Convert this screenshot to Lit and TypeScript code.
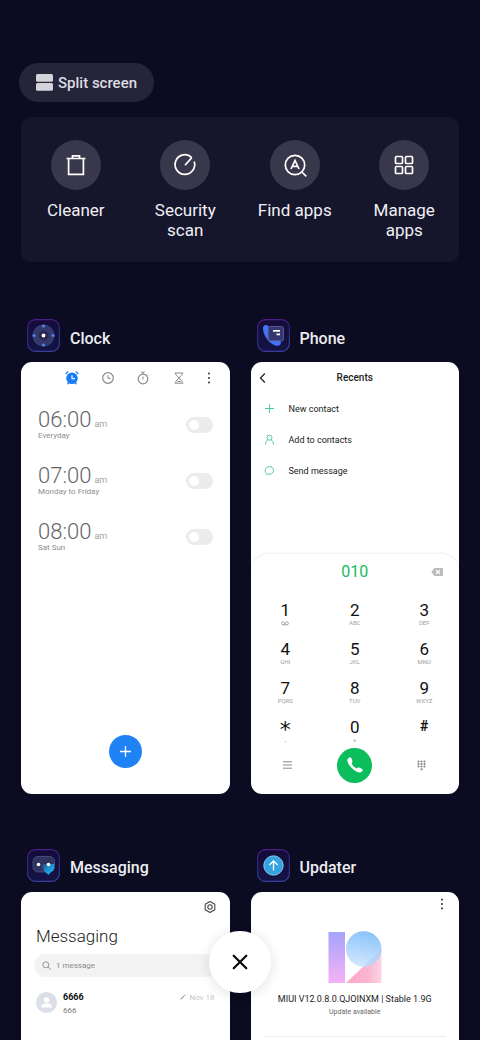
import { LitElement, html, css, svg, nothing } from "lit";
import { customElement, property } from "lit/decorators.js";

const reset = css`
  * { box-sizing: border-box; }
  button {
    font: inherit;
    color: inherit;
    background: none;
    border: 0;
    padding: 0;
    margin: 0;
    cursor: pointer;
  }
  svg { display: block; flex: none; }
`;

const moreDots = svg`<circle cx="7" cy="2.5" r="1"/><circle cx="7" cy="7" r="1"/><circle cx="7" cy="11.5" r="1"/>`;

/* ---------- Quick actions ---------- */

@customElement("quick-actions")
class QuickActions extends LitElement {
  static styles = [reset, css`
    :host { display: block; }
    .panel {
      display: grid;
      grid-template-columns: repeat(4, 1fr);
      padding: 23px 0 22px;
      border-radius: 10px;
      background: #15152b;
    }
    .action {
      display: flex;
      flex-direction: column;
      align-items: center;
      gap: 10px;
      color: #f0f0f4;
      font-size: 17px;
      line-height: 20px;
    }
    .label { max-width: 80px; }
    .disc {
      display: grid;
      place-items: center;
      width: 50px;
      height: 50px;
      border-radius: 50%;
      background: #38374b;
    }
  `];

  icons = {
    bin: svg`<path d="M2.500 5.500H21.500M8.500 5.500V2.800H15.500V5.500M4.600 5.500V21.300H19.400V5.500"/>`,
    scan: svg`<path d="M18.800 4.600A9.800 9.800 0 1 0 21.200 8.500M12 12.300L18.800 4.600"/>`,
    find: svg`<circle cx="12" cy="12" r="9.700"/><path d="M18.800 19L23.300 23.300"/><path d="M8 16L12 7.500L16 16M9.600 13.300H14.400"/>`,
    grid: svg`<rect x="3.500" y="3.500" width="7" height="7" rx="1"/><rect x="13.500" y="3.500" width="7" height="7" rx="1"/><rect x="3.500" y="13.500" width="7" height="7" rx="1"/><rect x="13.500" y="13.500" width="7" height="7" rx="1"/>`,
  };

  render() {
    const items = [
      ["Cleaner", this.icons.bin],
      ["Security scan", this.icons.scan],
      ["Find apps", this.icons.find],
      ["Manage apps", this.icons.grid],
    ];
    return html`<div class="panel">
      ${items.map(([label, icon]) => html`
        <button class="action">
          <span class="disc">
            <svg width="24" height="24" viewBox="0 0 24 24" fill="none" stroke="#fff" stroke-width="1.7" overflow="visible">${icon}</svg>
          </span>
          <span class="label">${label}</span>
        </button>`)}
    </div>`;
  }
}

/* ---------- Clock ---------- */

@customElement("clock-preview")
class ClockPreview extends LitElement {
  static styles = [reset, css`
    :host { display: flex; flex-direction: column; flex: 1; }
    .tabs {
      display: flex;
      align-items: center;
      height: 32px;
      padding: 0 9px 0 33px;
    }
    .tab { flex: 3; display: grid; place-items: center; }
    .more { flex: 2; display: grid; place-items: center; }
    .alarms { list-style: none; margin: 0; padding: 3px 17px 0; }
    .alarm {
      display: flex;
      align-items: center;
      justify-content: space-between;
      height: 56px;
      color: #8d8d8d;
    }
    .time { display: block; font-size: 22px; font-weight: 300; line-height: 22px; color: #666; }
    .ampm { font-size: 9px; font-weight: 400; line-height: 9px; color: #a4a4a4; margin-left: 3px; }
    .days { display: block; font-size: 8px; line-height: 10px; }
    .toggle {
      appearance: none;
      width: 27px;
      height: 16px;
      margin: 0;
      padding: 3px;
      border-radius: 8px;
      background: #ececec;
    }
    .toggle::before {
      content: "";
      display: block;
      width: 10px;
      height: 10px;
      border-radius: 50%;
      background: #fff;
    }
    .toggle:checked { background: #1f82f5; }
    .toggle:checked::before { margin-left: 11px; }
    .add {
      display: grid;
      place-items: center;
      width: 33px;
      height: 33px;
      margin: auto auto 26px;
      border-radius: 50%;
      background: #1f82f5;
    }
  `];

  render() {
    const alarms = [["06:00", "Everyday"], ["07:00", "Monday to Friday"], ["08:00", "Sat Sun"]];
    return html`
      <nav class="tabs">
        <button class="tab" aria-label="Alarm">
          <svg width="14" height="14" viewBox="0 0 14 14" fill="none" stroke-linecap="round">
            <circle cx="7" cy="7.300" r="5.800" fill="#1a7df5"/>
            <path d="M1 2.500L2.800 1M13 2.500L11.200 1M2.800 12.800L3.500 12M11.200 12.800L10.500 12" stroke="#1a7df5" stroke-width="1.300"/>
            <path d="M7 4.500V7.600H9.500" stroke="#fff" stroke-width="1.100"/>
          </svg>
        </button>
        <button class="tab" aria-label="World clock">
          <svg width="14" height="14" viewBox="0 0 14 14" fill="none" stroke="#8a8a8a">
            <circle cx="7" cy="7" r="5.300" stroke-width="1.200"/><path d="M7 4V7.300H9.800"/>
          </svg>
        </button>
        <button class="tab" aria-label="Stopwatch">
          <svg width="14" height="14" viewBox="0 0 14 14" fill="none" stroke="#8a8a8a">
            <circle cx="7" cy="8" r="4.800" stroke-width="1.200"/><path d="M7 5.500V8.500M5.300 1.200H8.700M7 1.200V3M11 3.500L12 4.500"/>
          </svg>
        </button>
        <button class="tab" aria-label="Timer">
          <svg width="14" height="14" viewBox="0 0 14 14" fill="none" stroke="#8a8a8a">
            <path d="M2.800 2H11.200M2.800 12.200H11.200M3.800 2V3.500L10.200 10.500V12M10.200 2V3.500L3.800 10.500V12M5.500 10.500H8.500"/>
          </svg>
        </button>
        <button class="more" aria-label="More">
          <svg width="14" height="14" viewBox="0 0 14 14" fill="#333">${moreDots}</svg>
        </button>
      </nav>
      <ul class="alarms">
        ${alarms.map(([time, days], i) => html`
          <li class="alarm">
            <label for="alarm-${i}">
              <span class="time">${time}<span class="ampm">am</span></span>
              <span class="days">${days}</span>
            </label>
            <input class="toggle" type="checkbox" id="alarm-${i}">
          </li>`)}
      </ul>
      <button class="add" aria-label="Add alarm">
        <svg width="13" height="13" viewBox="0 0 13 13" stroke="#fff" stroke-width="1.300"><path d="M6.500 1V12M1 6.500H12"/></svg>
      </button>`;
  }
}

/* ---------- Phone ---------- */

@customElement("phone-preview")
class PhonePreview extends LitElement {
  static styles = [reset, css`
    :host { display: flex; flex-direction: column; flex: 1; color: #222; }
    .bar {
      display: grid;
      grid-template-columns: 14px 1fr 14px;
      align-items: center;
      height: 31px;
      padding: 0 5px;
    }
    .title { margin: 0; font-size: 10px; font-weight: 500; text-align: center; }
    .options { display: flex; flex-direction: column; }
    .option {
      display: flex;
      align-items: center;
      gap: 14px;
      height: 31px;
      padding: 0 13px;
      font-size: 9px;
    }
    .dialer {
      margin-top: auto;
      padding-bottom: 11px;
      border-radius: 18px 18px 0 0;
      box-shadow: 0 -1px 3px rgba(0, 0, 0, 0.08);
    }
    .entry {
      display: grid;
      grid-template-columns: 1fr auto 1fr;
      align-items: center;
      height: 36px;
      padding: 0 16px;
      color: #14bd5c;
      font-size: 16px;
    }
    .number { grid-column: 2; }
    .erase { justify-self: end; }
    .keys {
      display: grid;
      grid-template-columns: repeat(3, 1fr);
      row-gap: 13px;
      padding: 11px 0 4px;
    }
    .key { display: flex; flex-direction: column; align-items: center; height: 26px; }
    .digit { height: 18px; font-size: 17px; line-height: 18px; color: #111; }
    .star { font-family: "DejaVu Sans", sans-serif; font-size: 22px; line-height: 24px; }
    .hash { font-size: 14px; font-weight: 700; line-height: 16px; }
    .letters { height: 8px; font-size: 6px; line-height: 8px; color: #a0a0a0; }
    .voicemail { padding-top: 2px; }
    .calls {
      display: grid;
      grid-template-columns: repeat(3, 1fr);
      place-items: center;
      padding: 0 4px;
    }
    .call {
      display: grid;
      place-items: center;
      width: 35px;
      height: 35px;
      border-radius: 50%;
      background: #0bbd5b;
    }
  `];

  render() {
    const options = [
      ["New contact", svg`<path d="M5.500 1V10M1 5.500H10"/>`],
      ["Add to contacts", svg`<circle cx="5.500" cy="3.700" r="2.500"/><path d="M1.500 10.500C1.500 7.500 3 6.300 4.200 6M9.500 10.500C9.500 7.500 8 6.300 6.800 6"/>`],
      ["Send message", svg`<path d="M3 9.500C0 7.500 .8 1.500 5.500 1.500C10.500 1.500 10.800 8.800 6 9.200H3"/>`],
    ];
    const keys = [
      ["1", ""], ["2", "ABC"], ["3", "DEF"],
      ["4", "GHI"], ["5", "JKL"], ["6", "MNO"],
      ["7", "PQRS"], ["8", "TUV"], ["9", "WXYZ"],
      ["*", ","], ["0", "+"], ["#", ""],
    ];
    const variant = (k: string) => (k === "*" ? "star" : k === "#" ? "hash" : "");
    return html`
      <header class="bar">
        <button aria-label="Back">
          <svg width="14" height="14" viewBox="0 0 14 14" fill="none" stroke="#222" stroke-width="1.300"><path d="M8.800 2.500L4.500 7L8.800 11.500"/></svg>
        </button>
        <h3 class="title">Recents</h3>
      </header>
      <div class="options">
        ${options.map(([label, icon]) => html`
          <button class="option">
            <svg width="11" height="11" viewBox="0 0 11 11" fill="none" stroke="#3cc795" stroke-width="0.900">${icon}</svg>
            ${label}
          </button>`)}
      </div>
      <section class="dialer">
        <div class="entry">
          <output class="number">010</output>
          <button class="erase" aria-label="Delete digit">
            <svg width="12" height="8" viewBox="0 0 12 8"><path d="M3.500 0H11Q12 0 12 1V7Q12 8 11 8H3.500L.3 4Z" fill="#b9b9b9"/><path d="M5 2L9 6M9 2L5 6" stroke="#fff" stroke-width="1.100"/></svg>
          </button>
        </div>
        <div class="keys">
          ${keys.map(([digit, letters]) => html`
            <button class="key">
              <span class="digit ${variant(digit)}">${digit}</span>
              ${digit === "1"
                ? html`<span class="letters voicemail"><svg width="8" height="5" viewBox="0 0 8 5" fill="none" stroke="#a0a0a0" stroke-width="0.800"><circle cx="2" cy="2.300" r="1.500"/><circle cx="6" cy="2.300" r="1.500"/><path d="M2 3.800H6"/></svg></span>`
                : letters ? html`<span class="letters">${letters}</span>` : nothing}
            </button>`)}
        </div>
        <div class="calls">
          <button aria-label="Menu">
            <svg width="9" height="8" viewBox="0 0 9 8" stroke="#888"><path d="M0 .8H9M0 4H9M0 7.200H9"/></svg>
          </button>
          <button class="call" aria-label="Call">
            <svg width="18" height="18" viewBox="0 0 18 18"><path d="M2.500 2C4 .8 5 1.200 5.700 3L6.400 5C6.700 6 6 6.500 5.600 7.200C6.500 9.500 8.500 11.500 10.800 12.400C11.500 12 12 11.300 13 11.600L15.300 12.600C17 13.300 17.200 14.300 16 15.500C14.500 17 11.500 16.800 8 14C4.500 11.200 2.200 8 1.500 5.500C1.200 4 1.500 2.800 2.500 2Z" fill="#fff"/></svg>
          </button>
          <button aria-label="Hide keypad">
            <svg width="9" height="11" viewBox="0 0 9 11" fill="#888">
              ${[1.5, 4.5, 7.5].map((x) => [1.5, 4, 6.5].map((y) => svg`<circle cx=${x} cy=${y} r="1.100"/>`))}
              <circle cx="4.500" cy="9.300" r="1.100"/>
            </svg>
          </button>
        </div>
      </section>`;
  }
}

/* ---------- Messaging ---------- */

@customElement("messaging-preview")
class MessagingPreview extends LitElement {
  static styles = [reset, css`
    :host { display: flex; flex-direction: column; flex: 1; padding: 8px 13px; }
    .settings { align-self: flex-end; }
    .title { margin: 10px 2px 6px; font-size: 17px; font-weight: 300; line-height: 24px; color: #222; }
    .search {
      display: flex;
      align-items: center;
      gap: 5px;
      height: 23px;
      padding: 0 8px;
      border-radius: 12px;
      background: #f3f3f3;
    }
    .query {
      flex: 1;
      min-width: 0;
      border: 0;
      padding: 0;
      background: none;
      font: 8px Roboto, sans-serif;
    }
    .query::placeholder { color: #8c8c8c; opacity: 1; }
    .thread {
      display: flex;
      align-items: center;
      gap: 6px;
      padding: 12px 2px;
      font-size: 8px;
      line-height: 13px;
      color: #777;
    }
    .body { flex: 1; padding-top: 2px; }
    .name { display: block; font-size: 9px; font-weight: 700; color: #111; }
    .date {
      align-self: flex-start;
      display: flex;
      align-items: center;
      gap: 3px;
      padding-top: 2px;
      color: #c6c6c6;
    }
  `];

  render() {
    return html`
      <button class="settings" aria-label="Settings">
        <svg width="14" height="14" viewBox="0 0 14 14" fill="none" stroke="#444" stroke-width="1.100"><path d="M7 1.500L11.800 4.200V9.800L7 12.500L2.200 9.800V4.200Z" stroke-linejoin="round"/><circle cx="7" cy="7" r="2.200"/></svg>
      </button>
      <h3 class="title">Messaging</h3>
      <label class="search">
        <svg width="9" height="9" viewBox="0 0 9 9" fill="none" stroke="#8a8a8a" stroke-width="0.900"><circle cx="3.800" cy="3.800" r="3"/><path d="M6 6L8.700 8.700"/></svg>
        <input class="query" type="text" placeholder="1 message" aria-label="Search messages">
      </label>
      <article class="thread">
        <svg width="21" height="21" viewBox="0 0 21 21"><circle cx="10.500" cy="10.500" r="10.500" fill="#dcdfe6"/><circle cx="10.500" cy="8" r="2.700" fill="#fff"/><path d="M5 15.500C5 12 7.500 11.500 10.500 11.500S16 12 16 15.500Z" fill="#fff"/></svg>
        <div class="body"><span class="name">6666</span>666</div>
        <span class="date">
          <svg width="6" height="6" viewBox="0 0 6 6" stroke="#aaa" stroke-width="1.300"><path d="M.6 5.400L4 2M4.400 1.600L5.400 .6"/></svg>
          Nov 18
        </span>
      </article>`;
  }
}

/* ---------- Updater ---------- */

@customElement("updater-preview")
class UpdaterPreview extends LitElement {
  static styles = [reset, css`
    :host {
      display: flex;
      flex-direction: column;
      align-items: center;
      flex: 1;
      padding: 5px 10px;
    }
    .more { align-self: flex-end; }
    .logo { margin: 20px 0 9px; }
    .version { margin: 0; font-size: 9px; line-height: 14px; color: #222; white-space: nowrap; }
    .status { margin: 0; font-size: 7px; line-height: 12px; color: #666; }
    .rule { width: 182px; margin: 18px 0 0; border: 0; border-top: 1px solid #eee; }
  `];

  render() {
    return html`
      <button class="more" aria-label="More">
        <svg width="14" height="14" viewBox="0 0 14 14" fill="#333">${moreDots}</svg>
      </button>
      <svg class="logo" width="54" height="52" viewBox="0 0 54 52">
        <defs>
          <linearGradient id="bar" x2="0" y2="1"><stop stop-color="#a5a4fb"/><stop offset="1" stop-color="#f6b1f6"/></linearGradient>
          <linearGradient id="ball" x1="0.600" x2="0.400" y2="1"><stop stop-color="#8ac3fb"/><stop offset="1" stop-color="#d3e8fd"/></linearGradient>
          <linearGradient id="foot"><stop stop-color="#ffa9c5"/><stop offset="0.600" stop-color="#fbb3cf"/><stop offset="1" stop-color="#fcd5e3"/></linearGradient>
          <clipPath id="overlap"><path d="M18 52L54 18V52Z"/></clipPath>
        </defs>
        <rect x="0.500" y="1" width="16.500" height="51" fill="url(#bar)"/>
        <path d="M18 52L53.500 18V52Z" fill="url(#foot)"/>
        <circle cx="35.700" cy="18" r="17.800" fill="url(#ball)"/>
        <circle cx="35.700" cy="18" r="17.800" fill="#b5c6f2" fill-opacity="0.500" clip-path="url(#overlap)"/>
      </svg>
      <p class="version">MIUI V12.0.8.0.QJOINXM | Stable 1.9G</p>
      <p class="status">Update available</p>
      <hr class="rule">`;
  }
}

/* ---------- Launcher icon ---------- */

@customElement("app-icon")
class AppIcon extends LitElement {
  static styles = [reset, css`:host { display: block; flex: none; }`];

  @property() name = "";

  art() {
    switch (this.name) {
      case "Clock":
        return svg`
          <circle cx="16.500" cy="16.500" r="10.500" fill="#34386b" stroke="#3d4b86" stroke-width="0.800"/>
          <g fill="#4c86ef"><circle cx="16.500" cy="7" r="1.500"/><circle cx="16.500" cy="26" r="1.500"/><circle cx="7" cy="16.500" r="1.500"/><circle cx="26" cy="16.500" r="1.500"/></g>
          <circle cx="16.500" cy="16.500" r="5" fill="#2b2850"/><circle cx="16.500" cy="16.500" r="1.900" fill="#fff"/>`;
      case "Phone":
        return svg`
          <path d="M6 9.500C6 5.500 10 5 11.500 7.500L13 21H22L24 23C24 27 20 28 16 25.500C10 22 6 15 6 9.500Z" fill="#3d74fb"/>
          <rect x="11" y="7.500" width="15.500" height="14.500" rx="2" fill="#393d78" fill-opacity="0.880" stroke="#6a6fac" stroke-width="0.700"/>
          <path d="M16 11.800H23M19.500 15.300H23" stroke="#fff" stroke-width="1.800"/>`;
      case "Messaging":
        return svg`
          <defs><linearGradient id="tail" x1="0" y1="0" x2="1" y2="0.800"><stop stop-color="#31335f"/><stop offset="0.500" stop-color="#1c8fd0"/><stop offset="1" stop-color="#22b4ee"/></linearGradient></defs>
          <rect x="6" y="7.500" width="21.500" height="15.500" rx="5" fill="#31335f" stroke="#50548c" stroke-width="0.800"/>
          <path d="M14 15H27V19C27 21 26 22.300 24 23L21.500 26L17.500 22.500Z" fill="url(#tail)"/>
          <circle cx="11.500" cy="15.500" r="1.800" fill="#fff"/><circle cx="21.500" cy="15.500" r="1.800" fill="#fff"/>`;
      default:
        return svg`
          <circle cx="16.500" cy="16.500" r="9.700" fill="#35a3e0" stroke="#84c9ee" stroke-width="1"/>
          <path d="M16.500 21.500V12M12.300 16L16.500 12L20.700 16" fill="none" stroke="#fff" stroke-width="1.300"/>`;
    }
  }

  render() {
    return html`<svg width="33" height="33" viewBox="0 0 33 33" aria-hidden="true">
      <defs>
        <linearGradient id="edge" x1="0.400" x2="0.600" y2="1"><stop stop-color="#4f1d8b"/><stop offset="0.500" stop-color="#2b2a74"/><stop offset="1" stop-color="#3a3f9c"/></linearGradient>
        <linearGradient id="fill" x2="0" y2="1"><stop stop-color="#150b38"/><stop offset="1" stop-color="#131447"/></linearGradient>
      </defs>
      <rect x="0.600" y="0.600" width="31.800" height="31.800" rx="8" fill="url(#fill)" stroke="url(#edge)" stroke-width="1.200"/>
      ${this.art()}
    </svg>`;
  }
}

/* ---------- Recents screen ---------- */

@customElement("app-root")
class AppRoot extends LitElement {
  static styles = [reset, css`
    :host {
      display: block;
      position: relative;
      height: 100vh;
      overflow: hidden;
      background: #0b0b21;
      font-family: Roboto, sans-serif;
    }
    .screen { padding: 63px 21px 0; }
    .split {
      display: flex;
      align-items: center;
      gap: 5px;
      height: 39px;
      margin: 0 -2px 15px;
      padding: 0 17px;
      border-radius: 20px;
      background: #25253a;
      color: #dcdce2;
      font-size: 15px;
      font-weight: 500;
    }
    .tasks {
      display: grid;
      grid-template-columns: repeat(2, minmax(0, 1fr));
      gap: 55px 21px;
      margin-top: 57px;
    }
    .head {
      display: flex;
      align-items: center;
      gap: 10px;
      margin-bottom: 10px;
      padding-left: 6px;
    }
    .name {
      margin: 0;
      padding-top: 6px;
      font-size: 16px;
      font-weight: 500;
      line-height: 20px;
      color: #ededf2;
    }
    .card {
      display: flex;
      flex-direction: column;
      aspect-ratio: 14 / 29;
      overflow: hidden;
      border-radius: 11px;
      background: #fff;
    }
    .close {
      position: absolute;
      left: calc(50% - 31px);
      bottom: 47px;
      display: grid;
      place-items: center;
      width: 62px;
      height: 62px;
      border-radius: 50%;
      background: #fff;
      box-shadow: 0 2px 14px rgba(0, 0, 0, 0.12);
    }
  `];

  render() {
    const tasks = [
      { name: "Clock", view: html`<clock-preview></clock-preview>` },
      { name: "Phone", view: html`<phone-preview></phone-preview>` },
      { name: "Messaging", view: html`<messaging-preview></messaging-preview>` },
      { name: "Updater", view: html`<updater-preview></updater-preview>` },
    ];
    return html`
      <main class="screen">
        <button class="split">
          <svg width="17" height="17" viewBox="0 0 17 17" fill="#d3d3d9"><rect width="17" height="7.700" rx="1.500"/><rect y="9" width="17" height="7.700" rx="1.500"/></svg>
          Split screen
        </button>
        <quick-actions></quick-actions>
        <div class="tasks">
          ${tasks.map((t) => html`
            <section>
              <header class="head"><app-icon name=${t.name}></app-icon><h2 class="name">${t.name}</h2></header>
              <div class="card">${t.view}</div>
            </section>`)}
        </div>
      </main>
      <button class="close" aria-label="Close all">
        <svg width="16" height="16" viewBox="0 0 16 16" stroke="#0a0a0a" stroke-width="2.200" stroke-linecap="round"><path d="M1.700 1.700L14.300 14.300M14.300 1.700L1.700 14.300"/></svg>
      </button>`;
  }
}
